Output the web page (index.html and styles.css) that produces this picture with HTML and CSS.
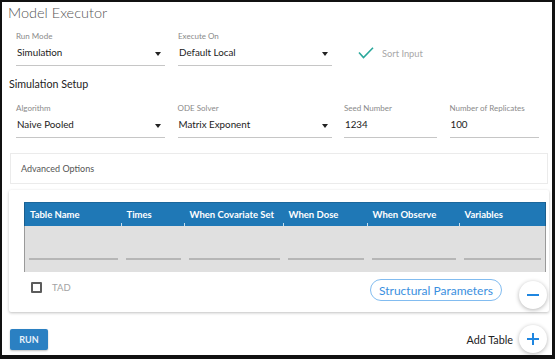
FILE: index.html
```html
<!DOCTYPE html>
<html lang="en">
<head>
<meta charset="utf-8">
<title>Model Executor</title>
<link rel="stylesheet" href="styles.css">
</head>
<body>
<div class="frame">
  <h1 class="title">Model Executor</h1>

  <div class="fields row1">
    <div class="field">
      <div class="label">Run Mode</div>
      <div class="value select">Simulation<span class="caret"></span></div>
    </div>
    <div class="field">
      <div class="label">Execute On</div>
      <div class="value select">Default Local<span class="caret"></span></div>
    </div>
    <div class="sort">
      <svg class="check" width="16" height="12" viewBox="0 0 16 12"><polyline points="1,5.5 5.5,10.5 15,0.8" fill="none" stroke="#2aa89b" stroke-width="1.6"/></svg>
      <span>Sort Input</span>
    </div>
  </div>

  <h2 class="section">Simulation Setup</h2>

  <div class="fields row2">
    <div class="field">
      <div class="label">Algorithm</div>
      <div class="value select">Naive Pooled<span class="caret"></span></div>
    </div>
    <div class="field">
      <div class="label">ODE Solver</div>
      <div class="value select">Matrix Exponent<span class="caret"></span></div>
    </div>
    <div class="field">
      <div class="label">Seed Number</div>
      <div class="value">1234</div>
    </div>
    <div class="field">
      <div class="label">Number of Replicates</div>
      <div class="value">100</div>
    </div>
  </div>

  <div class="adv">Advanced Options</div>

  <div class="card">
    <table class="grid">
      <colgroup>
        <col style="width:97px"><col style="width:63px"><col style="width:99px"><col style="width:84px"><col style="width:92px"><col style="width:86px">
      </colgroup>
      <thead>
        <tr><th>Table Name</th><th>Times</th><th>When Covariate Set</th><th>When Dose</th><th>When Observe</th><th>Variables</th></tr>
      </thead>
      <tbody>
        <tr><td><div class="cell"></div></td><td><div class="cell"></div></td><td><div class="cell"></div></td><td><div class="cell"></div></td><td><div class="cell"></div></td><td><div class="cell"></div></td></tr>
      </tbody>
    </table>
    <div class="card-foot">
      <span class="box"></span>
      <span class="tad">TAD</span>
      <span class="spacer"></span>
      <button class="pill">Structural Parameters</button>
      <button class="fab minus"><span class="bar"></span></button>
    </div>
  </div>

  <div class="bottom">
    <button class="run">RUN</button>
    <span class="spacer"></span>
    <span class="add-label">Add Table</span>
    <button class="fab plus"><span class="bar"></span><span class="bar vert"></span></button>
  </div>
</div>
</body>
</html>
```

FILE: styles.css
```css
html, body {
  margin: 0;
  padding: 0;
  background: #fff;
}

.frame {
  box-sizing: border-box;
  width: 555px;
  height: 359px;
  border: 2px solid #111;
  border-right-width: 3px;
  border-bottom-width: 4px;
  padding: 0 3px 0 6px;
  font-family: Lato, "Open Sans", sans-serif;
  color: #333;
  overflow: hidden;
}

.title {
  margin: 0 0 7px;
  font-size: 14.5px;
  line-height: 22px;
  font-weight: 300;
  color: #555;
}

.fields {
  display: grid;
  column-gap: 13px;
  padding-left: 8px;
}

.row1 {
  grid-template-columns: 149px 154px auto;
}

.row2 {
  grid-template-columns: 149px 154px 93px 89px;
  column-gap: 12.5px;
}

.label {
  font-size: 8px;
  line-height: 10px;
  color: #8a8a8a;
}

.value {
  position: relative;
  height: 17px;
  line-height: 17px;
  padding: 3px 0 4px 1px;
  font-size: 9.8px;
  color: #222;
  border-bottom: 1px solid #c6c6c6;
}

.caret {
  position: absolute;
  right: 4px;
  top: 11px;
  width: 0;
  height: 0;
  border-left: 3.5px solid transparent;
  border-right: 3.5px solid transparent;
  border-top: 4px solid #222;
}

.sort {
  display: flex;
  align-items: center;
  padding: 14px 0 0 13px;
  height: 16px;
  font-size: 9.3px;
  color: #a8a8a8;
}

.check {
  margin-right: 8px;
}

.section {
  margin: 10px 0 11px 1px;
  font-size: 10.7px;
  line-height: 16px;
  font-weight: 400;
  color: #222;
}

.adv {
  margin: 15px 1px 0 2px;
  height: 29px;
  line-height: 30px;
  border: 1px solid #ebebeb;
  padding-left: 10px;
  font-size: 9px;
  color: #555;
}

.card {
  margin: 6px 0 0 1px;
  height: 122px;
  box-sizing: border-box;
  padding: 12px 4px 0 15px;
  box-shadow: 0 1px 3px rgba(0, 0, 0, 0.25);
  border-radius: 2px;
}

.grid {
  width: 521px;
  table-layout: fixed;
  border-collapse: collapse;
}

.grid th {
  position: relative;
  height: 23px;
  padding: 0 0 0 5px;
  text-align: left;
  background: #1f78b6;
  color: #fff;
  font-size: 9.5px;
  font-weight: 700;
  white-space: nowrap;
  border-top: 1px solid #1b679c;
}

.grid th:first-child {
  border-left: 1px solid #1a5e8e;
}

.grid th:last-child {
  border-right: 1px solid #1a5e8e;
}

.grid th::after {
  content: "";
  position: absolute;
  right: 0;
  bottom: 0;
  width: 1px;
  height: 3px;
  background: rgba(255, 255, 255, 0.75);
}

.grid th:last-child::after {
  display: none;
}

.grid td {
  height: 46px;
  padding: 0 4px 0 4px;
  vertical-align: top;
  background: #e0e0e0;
}

.grid td:first-child {
  border-left: 1px solid #9a9a9a;
}

.grid td:last-child {
  border-right: 1px solid #9a9a9a;
}

.cell {
  height: 32px;
  border-bottom: 2px solid #b6b6b6;
}

.card-foot {
  display: flex;
  align-items: flex-start;
  padding-left: 7px;
  margin-right: -2px;
}

.box {
  box-sizing: border-box;
  width: 11px;
  height: 11px;
  margin-top: 10px;
  border: 2px solid #5c5c5c;
  border-radius: 1px;
}

.tad {
  margin: 9px 0 0 10px;
  font-size: 9.5px;
  line-height: 13px;
  color: #a3a3a3;
}

.spacer {
  flex: 1;
}

.pill {
  box-sizing: border-box;
  margin-top: 7px;
  height: 22px;
  width: 132px;
  padding: 0;
  border: 1.5px solid #82bcf0;
  border-radius: 11px;
  background: #fff;
  color: #3a8fe0;
  font-family: Lato, sans-serif;
  font-size: 12px;
  line-height: 19px;
}

.fab {
  position: relative;
  box-sizing: border-box;
  width: 28px;
  height: 28px;
  padding: 0;
  border: none;
  border-radius: 50%;
  background: #fff;
  box-shadow: 0 1px 4px rgba(0, 0, 0, 0.3);
}

.minus {
  margin: 9px 0 0 17px;
}

.bar {
  position: absolute;
  left: 8px;
  top: 13px;
  width: 12px;
  height: 2px;
  background: #1f86e0;
}

.bar.vert {
  left: 13px;
  top: 8px;
  width: 2px;
  height: 12px;
}

.bottom {
  display: flex;
  align-items: center;
  margin: 13px 0 0 2px;
  padding-right: 2px;
}

.run {
  width: 38px;
  height: 21px;
  padding: 0;
  border: none;
  border-radius: 2px;
  background: #2b80c2;
  color: #e8f1fa;
  font-family: Lato, sans-serif;
  font-size: 9px;
  font-weight: 700;
  box-shadow: 0 1px 2px rgba(0, 0, 0, 0.25);
}

.add-label {
  margin-right: 6px;
  font-size: 10.8px;
  color: #222;
}
```
